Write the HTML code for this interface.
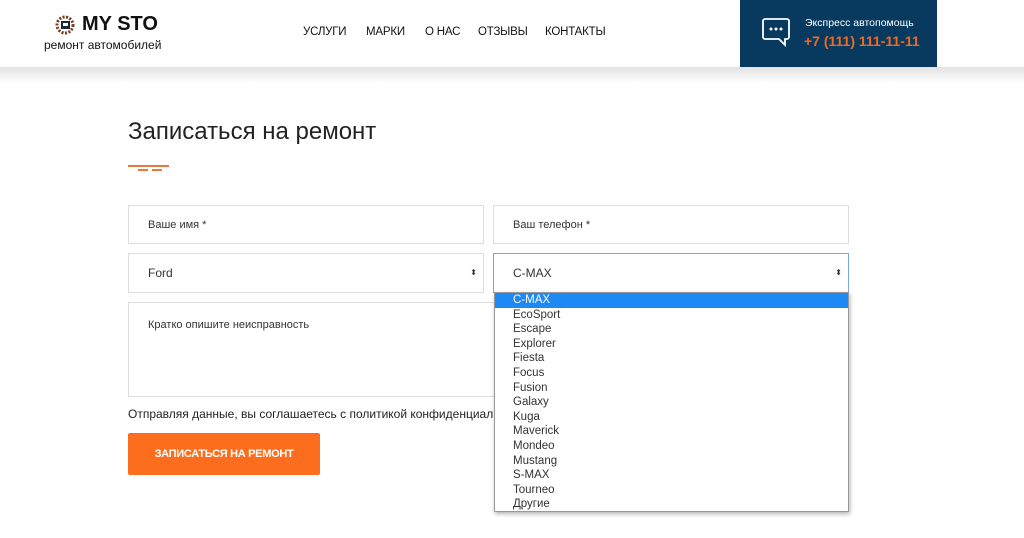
<!DOCTYPE html>
<html><head><meta charset="utf-8"><style>
*{box-sizing:border-box;margin:0;padding:0}
body{width:1024px;height:538px;overflow:hidden;background:#fff;font-family:"Liberation Sans",sans-serif;position:relative;color:#222}
.abs{position:absolute}
.hdr{left:0;top:0;width:1024px;height:67px;background:#fff}
.shadow{left:0;top:67px;width:1024px;height:16px;background:linear-gradient(#e2e2e2,#fff)}
.nav a{position:absolute;top:26px;font-size:11.5px;color:#111;text-decoration:none;letter-spacing:-0.2px}
.box{left:740px;top:0;width:197px;height:67px;background:#083a60}
.inp{position:absolute;border:1px solid #ddd;background:#fff;font-size:11px;color:#333;padding-left:19px}
.dd{left:494px;top:292px;width:355px;height:220px;background:#fff;border:1px solid #999;box-shadow:1px 2px 4px rgba(0,0,0,.3);font-size:11.5px;color:#333}
.dd div{height:14.6px;line-height:14.6px;padding-left:18px}
.dd .sel{background:#1e88f5;color:#fff}
</style></head><body>
<div class="abs hdr"></div>
<div class="abs shadow"></div>
<svg class="abs" style="left:55px;top:15px" width="20" height="20" viewBox="0 0 20 20"><circle cx="10" cy="10" r="8" fill="none" stroke="#7a3a1a" stroke-width="3" stroke-dasharray="2 1.5"/><rect x="6" y="6" width="9" height="8" fill="#1b2a3a"/><rect x="8" y="8" width="5" height="3" fill="#fff"/></svg>
<div class="abs" style="left:82px;top:13px;font-size:20px;font-weight:bold;color:#111">MY STO</div>
<div class="abs" style="left:44px;top:38px;font-size:12px;color:#111">ремонт автомобилей</div>
<div class="nav"><a style="left:303px">УСЛУГИ</a><a style="left:366px">МАРКИ</a><a style="left:425px">О НАС</a><a style="left:478px">ОТЗЫВЫ</a><a style="left:545px">КОНТАКТЫ</a></div>
<div class="abs box"></div>
<svg class="abs" style="left:761px;top:17px" width="32" height="32" viewBox="0 0 32 32"><path d="M4 2h22a2 2 0 0 1 2 2v16a2 2 0 0 1-2 2h-2v6l-6-6H4a2 2 0 0 1-2-2V4a2 2 0 0 1 2-2z" fill="none" stroke="#fff" stroke-width="1.8"/><circle cx="10" cy="12" r="1.5" fill="#fff"/><circle cx="15" cy="12" r="1.5" fill="#fff"/><circle cx="20" cy="12" r="1.5" fill="#fff"/></svg>
<div class="abs" style="left:805px;top:17px;font-size:10.5px;color:#fff">Экспресс автопомощь</div>
<div class="abs" style="left:804px;top:33px;font-size:14px;font-weight:bold;color:#f26a21">+7 (111) 111-11-11</div>
<div class="abs" style="left:128px;top:118px;font-size:24px;color:#222">Записаться на ремонт</div>
<div class="abs" style="left:128px;top:165px;width:41px;height:1.5px;background:#e87a3a"></div>
<div class="abs" style="left:138px;top:169px;width:10px;height:1.5px;background:#e87a3a"></div>
<div class="abs" style="left:152px;top:169px;width:10px;height:1.5px;background:#e87a3a"></div>
<div class="inp" style="left:128px;top:205px;width:356px;height:39px;line-height:38px">Ваше имя *</div>
<div class="inp" style="left:493px;top:205px;width:356px;height:39px;line-height:38px">Ваш телефон *</div>
<div class="inp" style="left:128px;top:253px;width:356px;height:40px;line-height:38px;font-size:12px">Ford<span style="position:absolute;right:6px;font-size:8px">⬍</span></div>
<div class="inp" style="left:493px;top:253px;width:356px;height:40px;line-height:38px;font-size:12px;border-color:#7aa7d6">C-MAX<span style="position:absolute;right:6px;font-size:8px">⬍</span></div>
<div class="inp" style="left:128px;top:302px;width:721px;height:95px;padding-top:16px">Кратко опишите неисправность</div>
<div class="abs" style="left:128px;top:407px;font-size:12px;color:#222;white-space:nowrap;width:366px;overflow:hidden">Отправляя данные, вы соглашаетесь с политикой конфиденциальности</div>
<div class="abs" style="left:128px;top:433px;width:192px;height:42px;background:#fc6e1d;border-radius:2px;color:#fff;font-size:11px;font-weight:bold;line-height:42px;text-align:center;letter-spacing:-0.3px">ЗАПИСАТЬСЯ НА РЕМОНТ</div>
<div class="abs dd"><div class="sel">C-MAX</div><div>EcoSport</div><div>Escape</div><div>Explorer</div><div>Fiesta</div><div>Focus</div><div>Fusion</div><div>Galaxy</div><div>Kuga</div><div>Maverick</div><div>Mondeo</div><div>Mustang</div><div>S-MAX</div><div>Tourneo</div><div>Другие</div></div>
</body></html>
